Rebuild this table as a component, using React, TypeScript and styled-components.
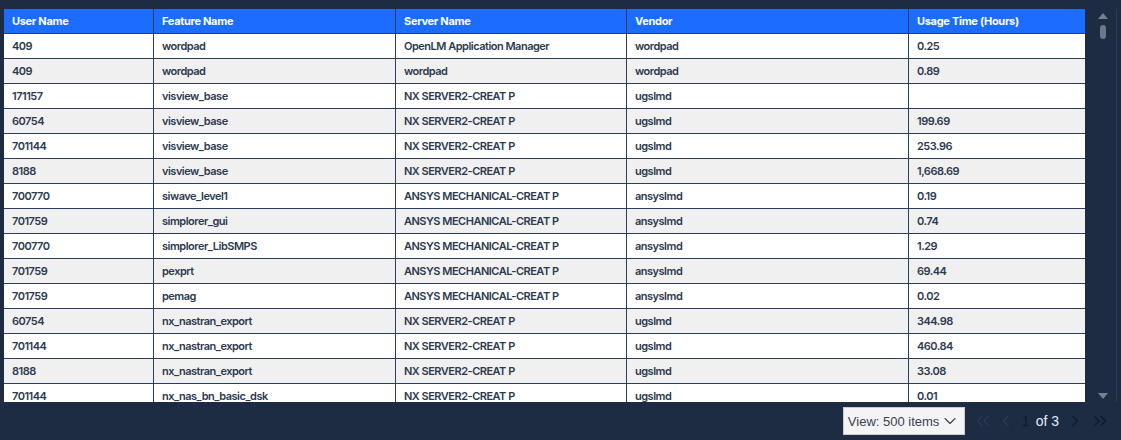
import React from "react";
import styled, { createGlobalStyle } from "styled-components";
import { ChevronDown, ChevronLeft, ChevronRight, ChevronsLeft, ChevronsRight } from "lucide-react";

const GlobalStyle = createGlobalStyle`
  html, body { margin: 0; padding: 0; background: #1d2c43; }
  * { box-sizing: border-box; }
`;

const Page = styled.div`
  width: 1121px;
  height: 440px;
  background: #1d2c43;
  display: flex;
  flex-direction: column;
  overflow: hidden;
`;

const Main = styled.div`
  display: flex;
  padding: 9px 0 0 4px;
  height: 402px;
  flex: none;
`;

const Viewport = styled.div`
  width: 1081px;
  height: 393px;
  overflow: hidden;
  background: #ffffff;
`;

const COLS = "149px 242px 231px 282px 177px";

const HeaderRow = styled.div`
  display: grid;
  grid-template-columns: ${COLS};
  height: 25px;
  background: #1b6cff;
  border-bottom: 1px solid #2c3e5a;
`;

const HeaderCell = styled.div<{ $first?: boolean }>`
  display: flex;
  align-items: center;
  padding-left: 8px;
  border-left: ${(p) => (p.$first ? "none" : "1px solid #2c3e5a")};
  color: #ffffff;
  font-family: Inter, "Noto Sans", sans-serif;
  font-weight: 700;
  font-size: 11px;
  letter-spacing: -0.3px;
  white-space: nowrap;
`;

const Row = styled.div<{ $alt: boolean }>`
  display: grid;
  grid-template-columns: ${COLS};
  height: 25px;
  background: ${(p) => (p.$alt ? "#f0f0f0" : "#ffffff")};
  border-bottom: 1px solid #2c3e5a;
`;

const Cell = styled.div<{ $first?: boolean }>`
  display: flex;
  align-items: center;
  padding-left: 8px;
  padding-bottom: 1px;
  border-left: ${(p) => (p.$first ? "none" : "1px solid #2c3e5a")};
  color: #2c3a4f;
  font-family: Inter, "Noto Sans", sans-serif;
  font-weight: 600;
  font-size: 11px;
  letter-spacing: -0.5px;
  white-space: nowrap;
  overflow: hidden;
`;

const ScrollColumn = styled.div`
  width: 32px;
  height: 393px;
  border-right: 1px solid #2b3c56;
  display: flex;
  flex-direction: column;
  align-items: center;
  padding-left: 5px;
`;

const Arrow = styled.svg<{ $top?: number; $bottom?: number }>`
  display: block;
  flex: none;
  margin-top: ${(p) => p.$top ?? 0}px;
  margin-bottom: ${(p) => p.$bottom ?? 0}px;
`;

const Thumb = styled.div`
  width: 6px;
  height: 14px;
  border-radius: 3px;
  background: #6d7889;
  margin-top: 6px;
`;

const Spacer = styled.div`
  flex: 1;
`;

const Footer = styled.div`
  display: flex;
  align-items: center;
  justify-content: flex-end;
  height: 38px;
  flex: none;
  padding-right: 10px;
`;

const Select = styled.div`
  width: 122px;
  height: 28px;
  flex: none;
  background: #f4f4f6;
  border: 1px solid #c9ccd2;
  display: flex;
  align-items: center;
  justify-content: space-between;
  padding: 0 4px 0 4px;
  color: #3a4250;
  font-family: "Liberation Sans", Arial, sans-serif;
  font-size: 13px;
  white-space: nowrap;
  margin-right: 7px;

  svg {
    flex: none;
  }
`;

const Pager = styled.div`
  display: flex;
  align-items: center;
  font-family: "Liberation Sans", Arial, sans-serif;
  font-size: 14px;
  white-space: nowrap;
`;

const PagerButton = styled.span<{ $disabled?: boolean; $gap?: number }>`
  display: flex;
  align-items: center;
  color: ${(p) => (p.$disabled ? "#2c3b52" : "#0f1a29")};
  margin-right: ${(p) => p.$gap ?? 0}px;
`;

const PageNum = styled.span`
  color: #111a27;
  margin-right: 6px;
`;

const PageOf = styled.span`
  color: #e6ecf3;
  margin-right: 6px;
`;

type Rec = [string, string, string, string, string];

const data: Rec[] = [
  ["409", "wordpad", "OpenLM Application Manager", "wordpad", "0.25"],
  ["409", "wordpad", "wordpad", "wordpad", "0.89"],
  ["171157", "visview_base", "NX SERVER2-CREAT P", "ugslmd", ""],
  ["60754", "visview_base", "NX SERVER2-CREAT P", "ugslmd", "199.69"],
  ["701144", "visview_base", "NX SERVER2-CREAT P", "ugslmd", "253.96"],
  ["8188", "visview_base", "NX SERVER2-CREAT P", "ugslmd", "1,668.69"],
  ["700770", "siwave_level1", "ANSYS MECHANICAL-CREAT P", "ansyslmd", "0.19"],
  ["701759", "simplorer_gui", "ANSYS MECHANICAL-CREAT P", "ansyslmd", "0.74"],
  ["700770", "simplorer_LibSMPS", "ANSYS MECHANICAL-CREAT P", "ansyslmd", "1.29"],
  ["701759", "pexprt", "ANSYS MECHANICAL-CREAT P", "ansyslmd", "69.44"],
  ["701759", "pemag", "ANSYS MECHANICAL-CREAT P", "ansyslmd", "0.02"],
  ["60754", "nx_nastran_export", "NX SERVER2-CREAT P", "ugslmd", "344.98"],
  ["701144", "nx_nastran_export", "NX SERVER2-CREAT P", "ugslmd", "460.84"],
  ["8188", "nx_nastran_export", "NX SERVER2-CREAT P", "ugslmd", "33.08"],
  ["701144", "nx_nas_bn_basic_dsk", "NX SERVER2-CREAT P", "ugslmd", "0.01"],
];

const headers = ["User Name", "Feature Name", "Server Name", "Vendor", "Usage Time (Hours)"];

export default function App() {
  return (
    <Page>
      <GlobalStyle />
      <Main>
        <Viewport>
          <HeaderRow>
            {headers.map((h, i) => (
              <HeaderCell key={h} $first={i === 0}>
                {h}
              </HeaderCell>
            ))}
          </HeaderRow>
          {data.map((r, ri) => (
            <Row key={ri} $alt={ri % 2 === 1}>
              {r.map((c, ci) => (
                <Cell key={ci} $first={ci === 0}>
                  {c}
                </Cell>
              ))}
            </Row>
          ))}
        </Viewport>
        <ScrollColumn>
          <Arrow width="10" height="6" viewBox="0 0 10 6" $top={4}>
            <polygon points="5,0 10,6 0,6" fill="#76818f" />
          </Arrow>
          <Thumb />
          <Spacer />
          <Arrow width="10" height="6" viewBox="0 0 10 6" $bottom={3}>
            <polygon points="0,0 10,0 5,6" fill="#76818f" />
          </Arrow>
        </ScrollColumn>
      </Main>
      <Footer>
        <Select>
          <span>View: 500 items</span>
          <ChevronDown size={20} strokeWidth={1.3} color="#3a4250" />
        </Select>
        <Pager>
          <PagerButton $disabled $gap={2}>
            <ChevronsLeft size={22} strokeWidth={1.4} />
          </PagerButton>
          <PagerButton $disabled $gap={6}>
            <ChevronLeft size={20} strokeWidth={1.4} />
          </PagerButton>
          <PageNum>1</PageNum>
          <PageOf>of 3</PageOf>
          <PagerButton $gap={4}>
            <ChevronRight size={20} strokeWidth={1.4} />
          </PagerButton>
          <PagerButton>
            <ChevronsRight size={22} strokeWidth={1.4} />
          </PagerButton>
        </Pager>
      </Footer>
    </Page>
  );
}
